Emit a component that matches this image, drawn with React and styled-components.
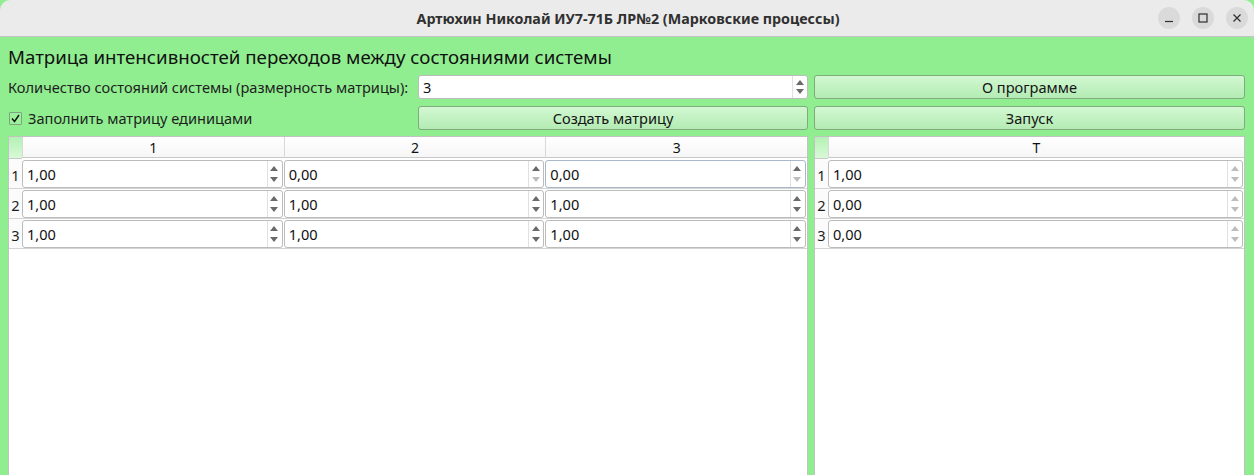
import React from 'react';
import styled, { createGlobalStyle } from 'styled-components';

const GlobalStyle = createGlobalStyle`
  html, body {
    margin: 0;
    padding: 0;
    background: #90ee90;
    font-family: 'Noto Sans', 'Open Sans', sans-serif;
    color: #1e1e1e;
    overflow: hidden;
  }
`;

const Window = styled.div`
  width: 1254px;
  height: 475px;
  display: flex;
  flex-direction: column;
  background: #90ee90;
`;

const TitleBar = styled.div`
  height: 36px;
  flex: none;
  background: #ebebeb;
  border-bottom: 1px solid #c4c4c4;
  border-top-left-radius: 10px;
  border-top-right-radius: 10px;
  display: flex;
  align-items: center;
  justify-content: center;
  position: relative;
`;

const Title = styled.div`
  font-size: 14.3px;
  font-weight: 700;
  color: #303030;
  padding-left: 2px;
`;

const Controls = styled.div`
  position: absolute;
  right: 6px;
  top: 7px;
  display: flex;
  gap: 12px;
`;

const CtrlButton = styled.div`
  width: 22px;
  height: 22px;
  border-radius: 50%;
  background: #dadada;
  display: flex;
  align-items: center;
  justify-content: center;
`;

const Body = styled.div`
  flex: 1;
  display: grid;
  grid-template-columns: 404px 390px 431px;
  grid-template-rows: 31px 24px 24px 1fr;
  column-gap: 6px;
  row-gap: 7px;
  padding: 0 9px 0 8px;
  min-height: 0;
`;

const Heading = styled.div`
  grid-column: 1 / 4;
  font-size: 18.7px;
  line-height: 20px;
  padding-top: 10px;
  color: #111;
`;

const Label = styled.div`
  font-size: 14.6px;
  display: flex;
  align-items: center;
  white-space: nowrap;
`;

const CheckRow = styled.label`
  font-size: 14.6px;
  display: flex;
  align-items: center;
  gap: 6px;
  padding-left: 1px;
  white-space: nowrap;
`;

const CheckBox = styled.span`
  width: 11px;
  height: 11px;
  border: 1px solid #7ea47e;
  background: #9cf09c;
  border-radius: 1px;
  display: flex;
  align-items: center;
  justify-content: center;
`;

const Button = styled.div`
  height: 24px;
  box-sizing: border-box;
  border: 1px solid #7fab7f;
  border-radius: 3px;
  background: linear-gradient(#d2f8d2, #b3ebb3);
  display: flex;
  align-items: center;
  justify-content: center;
  font-size: 14.6px;
  color: #151515;
`;

const SpinField = styled.div`
  box-sizing: border-box;
  height: ${(p) => (p.$cell ? '28px' : '24px')};
  border: 1px solid ${(p) => (p.$focus ? '#a9b8c9' : '#bcbcbc')};
  border-radius: 3px;
  background: #fff;
  display: flex;
  align-items: center;
  font-size: 14.6px;
  color: #111;
`;

const SpinText = styled.div`
  flex: 1;
  padding-left: 4px;
`;

const SpinArrows = styled.div`
  width: 13px;
  align-self: stretch;
  border-left: 1px solid #e0e0e0;
  display: flex;
  flex-direction: column;
  align-items: center;
  justify-content: center;
  gap: ${(p) => (p.$cell ? '6px' : '4px')};
  margin-right: 1px;
`;

const TableWrap = styled.div`
  grid-column: ${(p) => p.$span};
  margin-top: -1px;
  background: #fff;
  border: 1px solid #c2c2c2;
  border-bottom: none;
  display: grid;
  grid-template-columns: 13px ${(p) => p.$cols};
  grid-auto-rows: min-content;
  align-content: start;
  min-height: 0;
`;

const Corner = styled.div`
  height: 21px;
  background: linear-gradient(#b3f2b3, #d8f8d8);
  border-bottom: 1px solid #c8c8c8;
`;

const HeadCell = styled.div`
  height: 21px;
  box-sizing: border-box;
  border-bottom: 1px solid #c8c8c8;
  border-left: 1px solid #d8d8d8;
  background: linear-gradient(#ffffff, #f6f6f6);
  display: flex;
  align-items: center;
  justify-content: center;
  font-size: 14px;
  color: #111;
`;

const RowHead = styled.div`
  height: 30px;
  box-sizing: border-box;
  border-bottom: 1px solid #d4d4d4;
  background: #fbfbfb;
  display: flex;
  align-items: center;
  justify-content: center;
  font-size: 14.6px;
  padding-top: 2px;
`;

const Cell = styled.div`
  height: 30px;
  box-sizing: border-box;
  padding: 1px 1px 0 0;
  border-bottom: 1px solid #d4d4d4;
`;

function Arrow({ up, dim }) {
  return (
    <svg width="8" height="5" viewBox="0 0 8 5">
      <path
        d={up ? 'M0 5 L4 0 L8 5 Z' : 'M0 0 L4 5 L8 0 Z'}
        fill={dim ? '#bdbdbd' : '#6a6a6a'}
      />
    </svg>
  );
}

function Spin({ value, cell, focus, upDim, downDim }) {
  return (
    <SpinField $cell={cell} $focus={focus}>
      <SpinText>{value}</SpinText>
      <SpinArrows $cell={cell}>
        <Arrow up dim={upDim} />
        <Arrow dim={downDim} />
      </SpinArrows>
    </SpinField>
  );
}

const matrix = [
  ['1,00', '0,00', '0,00'],
  ['1,00', '1,00', '1,00'],
  ['1,00', '1,00', '1,00'],
];

const times = ['1,00', '0,00', '0,00'];

export default function App() {
  return (
    <Window>
      <GlobalStyle />
      <TitleBar>
        <Title>Артюхин Николай ИУ7-71Б ЛР№2 (Марковские процессы)</Title>
        <Controls>
          <CtrlButton>
            <svg width="10" height="10" viewBox="0 0 10 10">
              <path d="M1 8.5 H9" stroke="#2e2e2e" strokeWidth="1.2" />
            </svg>
          </CtrlButton>
          <CtrlButton>
            <svg width="10" height="10" viewBox="0 0 10 10">
              <rect x="1" y="1" width="8" height="8" fill="none" stroke="#2e2e2e" strokeWidth="1.2" />
            </svg>
          </CtrlButton>
          <CtrlButton>
            <svg width="10" height="10" viewBox="0 0 10 10">
              <path d="M1.5 1.5 L8.5 8.5 M8.5 1.5 L1.5 8.5" stroke="#2e2e2e" strokeWidth="1.2" />
            </svg>
          </CtrlButton>
        </Controls>
      </TitleBar>
      <Body>
        <Heading>Матрица интенсивностей переходов между состояниями системы</Heading>

        <Label>Количество состояний системы (размерность матрицы):</Label>
        <Spin value="3" />
        <Button>О программе</Button>

        <CheckRow>
          <CheckBox>
            <svg width="9" height="9" viewBox="0 0 9 9">
              <path d="M1 4.5 L3.5 7.5 L8 1" fill="none" stroke="#111" strokeWidth="1.4" />
            </svg>
          </CheckBox>
          Заполнить матрицу единицами
        </CheckRow>
        <Button>Создать матрицу</Button>
        <Button>Запуск</Button>

        <TableWrap $span="1 / 3" $cols="repeat(3, 1fr)">
          <Corner />
          {['1', '2', '3'].map((h) => (
            <HeadCell key={h}>{h}</HeadCell>
          ))}
          {matrix.map((row, i) => (
            <React.Fragment key={i}>
              <RowHead>{i + 1}</RowHead>
              {row.map((v, j) => (
                <Cell key={j}>
                  <Spin value={v} cell focus={i === 0 && j === 2} downDim={v === '0,00'} />
                </Cell>
              ))}
            </React.Fragment>
          ))}
        </TableWrap>

        <TableWrap $span="3 / 4" $cols="1fr">
          <Corner />
          <HeadCell>Т</HeadCell>
          {times.map((v, i) => (
            <React.Fragment key={i}>
              <RowHead>{i + 1}</RowHead>
              <Cell>
                <Spin value={v} cell upDim downDim />
              </Cell>
            </React.Fragment>
          ))}
        </TableWrap>
      </Body>
    </Window>
  );
}
